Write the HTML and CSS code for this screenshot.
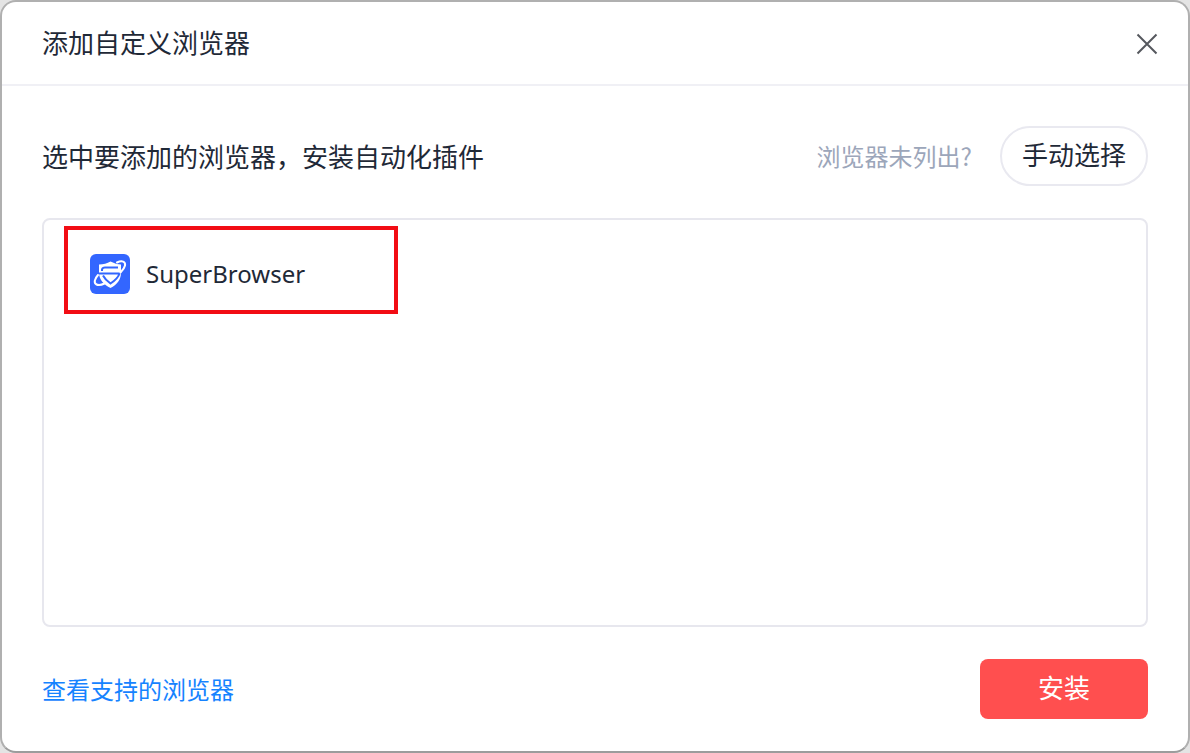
FILE: index.html
```
<!DOCTYPE html>
<html lang="zh-CN">
<head>
<meta charset="utf-8">
<meta name="viewport" content="width=device-width, initial-scale=1">
<title>添加自定义浏览器</title>
<link rel="stylesheet" href="styles.css">
</head>
<body>
<main class="dialog" role="dialog" aria-labelledby="dialog-title">
  <header class="dialog-header">
    <h1 class="dialog-title" id="dialog-title">添加自定义浏览器</h1>
    <button class="close-button" type="button" aria-label="关闭">
      <svg class="close-icon" viewBox="0 0 22 22" aria-hidden="true"><path d="M1.5 1.5 20.5 20.5M20.5 1.5 1.5 20.5"/></svg>
    </button>
  </header>
  <div class="dialog-body">
    <div class="toolbar">
      <p class="prompt">选中要添加的浏览器，安装自动化插件</p>
      <span class="hint">浏览器未列出?</span>
      <button class="manual-button" type="button">手动选择</button>
    </div>
    <div class="browser-list">
      <button class="browser-item" type="button">
        <svg class="browser-icon" viewBox="0 0 40 40" aria-hidden="true">
          <rect width="40" height="40" rx="6" fill="#3366ff"/>
          <path d="M9 10.500Q15.500 10.500 20.500 7.500Q26 10.500 31 10.500V18.500C31 26 27 30.500 20.500 34C14 30.500 9 26 9 18.500Z" fill="#fff"/>
          <path d="M12 17V15.500Q12.500 13.500 15 13.500H28" fill="none" stroke="#3366ff" stroke-width="2"/>
          <path d="M9 19.500H29.500Q28 24.500 20.500 29.500Q15 25.500 13 21.500" fill="none" stroke="#3366ff" stroke-width="2"/>
          <path d="M27 8.500C32 6 35.800 7.500 35 11.500C34.500 14 32.500 16.500 30.500 18.500M8 21C4.500 25 3.500 29 6.500 30.500C8.500 31.500 11.500 31 14.500 29.500" fill="none" stroke="#fff" stroke-width="2" stroke-linecap="round"/>
        </svg>
        <span>SuperBrowser</span>
      </button>
    </div>
    <footer class="dialog-footer">
      <a class="support-link" href="#">查看支持的浏览器</a>
      <button class="install-button" type="button">安装</button>
    </footer>
  </div>
</main>
</body>
</html>
```
FILE: styles.css
```
* {
  box-sizing: border-box;
}

body {
  margin: 0;
  min-height: 100vh;
  display: flex;
  background: #e4e4e4;
  color: #1f2937;
  font-family: "Noto Sans CJK SC", sans-serif;
  font-size: 26px;
  line-height: 36px;
}

button {
  padding: 0;
  border: 0;
  background: none;
  color: inherit;
  font: inherit;
  cursor: pointer;
}

.dialog {
  flex: 1;
  display: flex;
  flex-direction: column;
  border: 2px solid #b0b0b0;
  border-bottom-color: #9c9c9c;
  border-radius: 16px;
  background: #fff;
}

.dialog-header {
  display: flex;
  align-items: center;
  justify-content: space-between;
  height: 84px;
  padding: 0 30px 2px 40px;
  border-bottom: 2px solid #f0f0f5;
}

.dialog-title {
  margin: 0;
  font-size: 26px;
  font-weight: 400;
}

.close-button {
  display: flex;
  padding: 4px 0 0;
}

.close-icon {
  width: 22px;
  height: 22px;
  fill: none;
  stroke: #55585e;
  stroke-width: 2;
}

.dialog-body {
  flex: 1;
  display: flex;
  flex-direction: column;
  padding: 40px 40px 32px;
}

.toolbar {
  display: flex;
  align-items: center;
}

.prompt {
  flex: 1;
  margin: 0;
}

.hint {
  margin-right: 28px;
  color: #9ca6ba;
  font-size: 24px;
}

.manual-button {
  height: 60px;
  padding: 0 20px 4px;
  border: 2px solid #e9e9f0;
  border-radius: 30px;
}

.browser-list {
  flex: 1;
  margin: 32px 0;
  padding: 6px 20px;
  border: 2px solid #e7e7ee;
  border-radius: 8px;
}

.browser-item {
  display: flex;
  align-items: center;
  gap: 16px;
  width: 334px;
  max-width: 100%;
  height: 88px;
  padding: 8px 22px 0;
  border: 4px solid #f20d14;
  font-family: "Noto Sans", "Noto Sans CJK SC", sans-serif;
  font-size: 24px;
}

.browser-icon {
  width: 40px;
  height: 40px;
}

.dialog-footer {
  display: flex;
  align-items: center;
  justify-content: space-between;
}

.support-link {
  color: #1683ff;
  font-size: 24px;
  text-decoration: none;
}

.install-button {
  width: 168px;
  height: 60px;
  padding-bottom: 4px;
  border-radius: 8px;
  background: #ff4f4f;
  color: #fff;
}
```
